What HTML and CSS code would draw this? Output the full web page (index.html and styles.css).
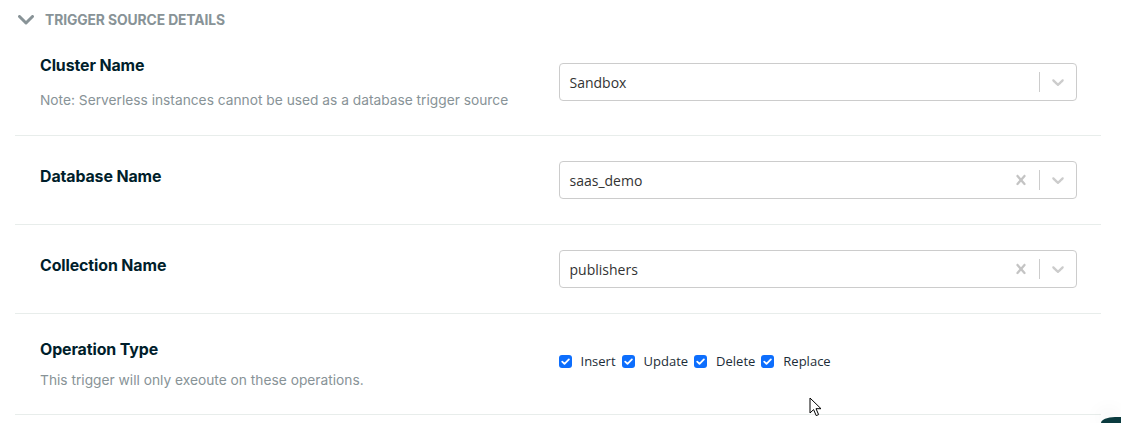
FILE: index.html
```html
<!DOCTYPE html>
<html>
<head>
<meta charset="utf-8">
<link rel="stylesheet" href="styles.css">
</head>
<body>
<div class="page">
  <div class="section-head">
    <svg class="head-chev" width="16" height="10" viewBox="0 0 16 10"><polyline points="1.5,1.5 8,8 14.5,1.5" fill="none" stroke="#889397" stroke-width="3" stroke-linecap="round" stroke-linejoin="round"/></svg>
    <span class="head-title">TRIGGER SOURCE DETAILS</span>
  </div>

  <div class="row row-first">
    <div class="left">
      <div class="label">Cluster Name</div>
      <div class="note note-first">Note: Serverless instances cannot be used as a database trigger source</div>
    </div>
    <div class="select select-first">
      <div class="value">Sandbox</div>
      <div class="indicators">
        <span class="sep"></span>
        <span class="ind"><svg width="20" height="20" viewBox="0 0 20 20"><path fill="#cccccc" d="M4.516 7.548c0.436-0.446 1.043-0.481 1.576 0l3.908 3.747 3.908-3.747c0.533-0.481 1.141-0.446 1.574 0 0.436 0.445 0.408 1.197 0 1.615-0.406 0.418-4.695 4.502-4.695 4.502-0.217 0.223-0.502 0.335-0.787 0.335s-0.57-0.112-0.789-0.335c0 0-4.287-4.084-4.695-4.502s-0.436-1.17 0-1.615z"/></svg></span>
      </div>
    </div>
  </div>

  <div class="row row-single">
    <div class="left single">
      <div class="label">Database Name</div>
    </div>
    <div class="select">
      <div class="value">saas_demo</div>
      <div class="indicators">
        <span class="ind"><svg width="20" height="20" viewBox="0 0 20 20"><path fill="#c4c4c4" d="M14.348 14.849c-0.469 0.469-1.229 0.469-1.697 0l-2.651-3.030-2.651 3.029c-0.469 0.469-1.229 0.469-1.697 0-0.469-0.469-0.469-1.229 0-1.697l2.758-3.15-2.759-3.152c-0.469-0.469-0.469-1.228 0-1.697s1.228-0.469 1.697 0l2.652 3.031 2.651-3.031c0.469-0.469 1.228-0.469 1.697 0s0.469 1.229 0 1.697l-2.758 3.152 2.758 3.15c0.469 0.469 0.469 1.229 0 1.698z"/></svg></span>
        <span class="sep"></span>
        <span class="ind"><svg width="20" height="20" viewBox="0 0 20 20"><path fill="#cccccc" d="M4.516 7.548c0.436-0.446 1.043-0.481 1.576 0l3.908 3.747 3.908-3.747c0.533-0.481 1.141-0.446 1.574 0 0.436 0.445 0.408 1.197 0 1.615-0.406 0.418-4.695 4.502-4.695 4.502-0.217 0.223-0.502 0.335-0.787 0.335s-0.57-0.112-0.789-0.335c0 0-4.287-4.084-4.695-4.502s-0.436-1.17 0-1.615z"/></svg></span>
      </div>
    </div>
  </div>

  <div class="row row-single">
    <div class="left single">
      <div class="label">Collection Name</div>
    </div>
    <div class="select">
      <div class="value">publishers</div>
      <div class="indicators">
        <span class="ind"><svg width="20" height="20" viewBox="0 0 20 20"><path fill="#c4c4c4" d="M14.348 14.849c-0.469 0.469-1.229 0.469-1.697 0l-2.651-3.030-2.651 3.029c-0.469 0.469-1.229 0.469-1.697 0-0.469-0.469-0.469-1.229 0-1.697l2.758-3.150-2.759-3.152c-0.469-0.469-0.469-1.228 0-1.697s1.228-0.469 1.697 0l2.652 3.031 2.651-3.031c0.469-0.469 1.228-0.469 1.697 0s0.469 1.229 0 1.697l-2.758 3.152 2.758 3.15c0.469 0.469 0.469 1.229 0 1.698z"/></svg></span>
        <span class="sep"></span>
        <span class="ind"><svg width="20" height="20" viewBox="0 0 20 20"><path fill="#cccccc" d="M4.516 7.548c0.436-0.446 1.043-0.481 1.576 0l3.908 3.747 3.908-3.747c0.533-0.481 1.141-0.446 1.574 0 0.436 0.445 0.408 1.197 0 1.615-0.406 0.418-4.695 4.502-4.695 4.502-0.217 0.223-0.502 0.335-0.787 0.335s-0.57-0.112-0.789-0.335c0 0-4.287-4.084-4.695-4.502s-0.436-1.17 0-1.615z"/></svg></span>
      </div>
    </div>
  </div>

  <div class="row row-last">
    <div class="left">
      <div class="label">Operation Type</div>
      <div class="note note-last">This trigger will only exeoute on these operations.</div>
    </div>
    <div class="checks">
      <label class="check"><span class="box"><svg width="13" height="13" viewBox="0 0 13 13"><polyline points="3.2,6.6 5.5,8.9 9.9,4.4" fill="none" stroke="#fff" stroke-width="1.8" stroke-linecap="round" stroke-linejoin="round"/></svg></span>Insert</label>
      <label class="check"><span class="box"><svg width="13" height="13" viewBox="0 0 13 13"><polyline points="3.2,6.6 5.5,8.9 9.9,4.4" fill="none" stroke="#fff" stroke-width="1.8" stroke-linecap="round" stroke-linejoin="round"/></svg></span>Update</label>
      <label class="check"><span class="box"><svg width="13" height="13" viewBox="0 0 13 13"><polyline points="3.2,6.6 5.5,8.9 9.9,4.4" fill="none" stroke="#fff" stroke-width="1.8" stroke-linecap="round" stroke-linejoin="round"/></svg></span>Delete</label>
      <label class="check"><span class="box"><svg width="13" height="13" viewBox="0 0 13 13"><polyline points="3.2,6.6 5.5,8.9 9.9,4.4" fill="none" stroke="#fff" stroke-width="1.8" stroke-linecap="round" stroke-linejoin="round"/></svg></span>Replace</label>
    </div>
  </div>
</div>

<svg class="cursor" width="14" height="21" viewBox="0 0 14 21"><path d="M1 1 L1 16 L4.6 12.6 L7.2 18.6 L9.6 17.6 L7 11.7 L12 11.7 Z" fill="#fff" stroke="#000" stroke-width="1" stroke-linejoin="miter"/></svg>
<div class="chat-bubble"></div>
</body>
</html>
```

FILE: styles.css
```css
* { box-sizing: border-box; }
html, body { margin: 0; padding: 0; background: #fff; overflow: hidden; }
body {
  width: 1121px;
  height: 423px;
  font-family: "Lato", "Open Sans", sans-serif;
  position: relative;
}
.page {
  margin: 0 20px 0 15px;
}
.section-head {
  height: 40px;
  display: flex;
  align-items: center;
  padding-left: 3px;
  padding-bottom: 1px;
}
.head-chev { margin-right: 11px; }
.head-title {
  font-family: "Inter", sans-serif;
  font-weight: 700;
  font-size: 13.85px;
  color: #889397;
  letter-spacing: -0.1px;
}
.row {
  display: grid;
  grid-template-columns: 1fr 1fr;
  padding: 0 24px 0 25px;
  border-bottom: 1px solid #e8edeb;
}
.row-first { padding-top: 16px; padding-bottom: 25px; align-items: start; }
.row-single { padding-top: 25px; padding-bottom: 25px; align-items: center; }
.row-last { padding-top: 26px; padding-bottom: 24px; align-items: start; }
.left.single { margin-top: -6px; }
.label {
  font-family: "Inter", sans-serif;
  font-weight: 700;
  font-size: 15.9px;
  line-height: 20px;
  color: #001e2b;
  letter-spacing: -0.1px;
}
.note {
  font-family: "Inter", sans-serif;
  font-size: 13.75px;
  line-height: 20px;
  color: #889397;
}
.note-first { margin-top: 14px; }
.note-last { margin-top: 10px; }
.select {
  height: 38px;
  border: 1px solid #cccccc;
  border-radius: 4px;
  display: flex;
  align-items: center;
}
.select-first { margin-top: 7px; }
.value {
  flex: 1;
  padding-left: 10px;
  font-family: "Open Sans", sans-serif;
  font-size: 14px;
  color: #333;
}
.indicators {
  display: flex;
  align-items: center;
  align-self: stretch;
}
.sep {
  width: 1px;
  align-self: stretch;
  margin: 8px 0;
  background: #cccccc;
}
.ind {
  display: flex;
  padding: 8px;
}
.ind svg { display: block; }
.checks {
  display: flex;
  align-items: center;
  margin-top: 11px;
  height: 20px;
  gap: 6px;
}
.check {
  display: flex;
  align-items: center;
  font-family: "Open Sans", sans-serif;
  font-size: 13px;
  color: #1c2d38;
}
.box {
  width: 13px;
  height: 13px;
  border-radius: 3px;
  background: #0d6efd;
  margin-right: 9px;
  display: flex;
}
.box svg { display: block; }
.cursor {
  position: absolute;
  left: 809px;
  top: 397px;
}
.chat-bubble {
  position: absolute;
  left: 1101px;
  top: 417px;
  width: 20px;
  height: 6px;
  border-top-left-radius: 14px 6px;
  background: #0b3b3f;
  box-shadow: -4px -4px 18px rgba(0,0,0,0.10);
}
```
